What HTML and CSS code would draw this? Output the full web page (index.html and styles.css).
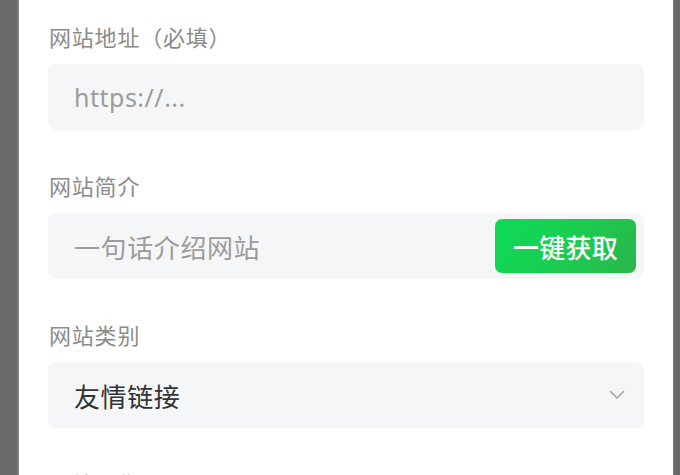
FILE: index.html
```html
<!DOCTYPE html>
<html lang="zh-CN">
<head>
<meta charset="utf-8">
<title>添加网站</title>
<link rel="stylesheet" href="styles.css">
</head>
<body>
<div class="screen">
  <div class="side side-left"></div>
  <div class="modal">
    <div class="field">
      <div class="label">网站地址（必填）</div>
      <div class="input"><span class="placeholder latin">https://...</span></div>
    </div>
    <div class="field">
      <div class="label">网站简介</div>
      <div class="input input-action">
        <span class="placeholder">一句话介绍网站</span>
        <button class="fetch-btn">一键获取</button>
      </div>
    </div>
    <div class="field">
      <div class="label">网站类别</div>
      <div class="input input-select">
        <span class="value">友情链接</span>
        <svg class="chevron" width="16" height="10" viewBox="0 0 16 10"><polyline points="1.5,1.5 8,8 14.5,1.5" fill="none" stroke="#a2a2a2" stroke-width="1.5" stroke-linecap="round" stroke-linejoin="round"/></svg>
      </div>
    </div>
    <div class="field">
      <div class="label">网站图像</div>
    </div>
  </div>
  <div class="side side-right"></div>
</div>
</body>
</html>
```
FILE: styles.css
```css
html, body {
  margin: 0;
  padding: 0;
  background: #676767;
}
body {
  font-family: "Noto Sans CJK SC", "Noto Sans", sans-serif;
}
.screen {
  display: flex;
  width: 680px;
  height: 475px;
  overflow: hidden;
}
.side {
  flex: none;
  height: 100%;
}
.side-left {
  width: 17px;
  background: #696969;
  border-right: 2px solid #7d7d7d;
}
.side-right {
  width: 6px;
  background: #6a6a6a;
  border-left: 1px solid #7d7d7d;
}
.modal {
  flex: 1;
  background: #ffffff;
  padding: 21px 29px 0 29px;
  box-sizing: border-box;
  overflow: hidden;
}
.field {
  margin-bottom: 40px;
}
.label {
  font-size: 22px;
  line-height: 30px;
  color: #8b8b8b;
  padding-left: 1px;
  margin-bottom: 13px;
  white-space: nowrap;
  letter-spacing: 0.8px;
}
.input {
  height: 66px;
  background: #f5f6f7;
  border-radius: 8px;
  display: flex;
  align-items: center;
  padding: 0 8px 0 26px;
  box-sizing: border-box;
}
.placeholder {
  font-size: 26px;
  color: #9c9c9c;
  letter-spacing: 0.6px;
}
.latin {
  font-family: "Noto Sans", sans-serif;
  font-size: 25px;
  letter-spacing: 0.5px;
}
.input-action {
  justify-content: space-between;
}
.fetch-btn {
  width: 141px;
  height: 54px;
  border: none;
  border-radius: 7px;
  background: linear-gradient(120deg, #0edb55 0%, #1ccb50 55%, #2ab64b 100%);
  color: #ffffff;
  font-family: "Noto Sans CJK SC", sans-serif;
  font-size: 26px;
  font-weight: 500;
  padding: 0;
  letter-spacing: 0.3px;
}
.input-select {
  justify-content: space-between;
  padding-right: 19px;
}
.value {
  font-size: 26px;
  color: #333333;
  letter-spacing: 0.6px;
}
.chevron {
  display: block;
}
```
